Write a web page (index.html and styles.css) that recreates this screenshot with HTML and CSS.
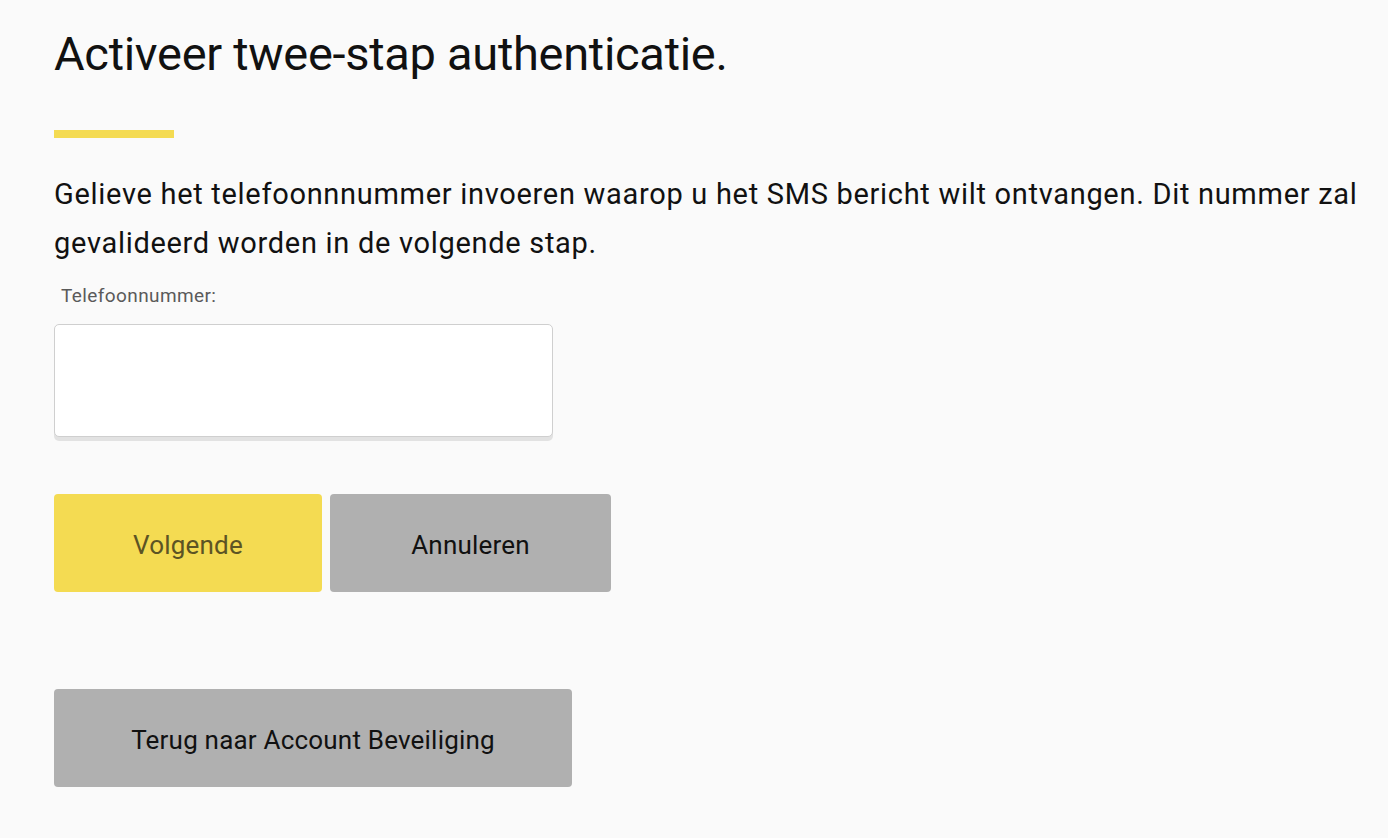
FILE: index.html
```html
<!DOCTYPE html>
<html lang="nl">
<head>
    <meta charset="UTF-8">
    <meta name="viewport" content="width=device-width, initial-scale=1.0">
    <title>Activeer twee-stap authenticatie</title>
    <link rel="stylesheet" href="styles.css">
</head>
<body>
    <main class="setup">
        <h1 class="setup-title">Activeer twee-stap authenticatie.</h1>
        <div class="accent-bar"></div>

        <p class="intro">Gelieve het telefoonnnummer invoeren waarop u het SMS bericht wilt ontvangen. Dit nummer zal gevalideerd worden in de volgende stap.</p>

        <form class="phone-form" onsubmit="return false;">
            <label class="field-label" for="phone">Telefoonnummer:</label>
            <input class="field-input" type="tel" id="phone" name="phone">

            <div class="actions">
                <button class="btn btn-primary" type="submit">Volgende</button>
                <button class="btn btn-secondary cancel" type="button">Annuleren</button>
            </div>
        </form>

        <a class="btn btn-secondary back" href="#">Terug naar Account Beveiliging</a>
    </main>
</body>
</html>
```

FILE: styles.css
```css
:root {
    --page-bg: #fafafa;
    --text-color: #111111;
    --label-color: #5a5a5a;
    --accent: #f4db52;
    --accent-text: #5c5424;
    --grey-btn: #b0b0b0;
    --input-border: #cfcfcf;
}

* {
    margin: 0;
    padding: 0;
    box-sizing: border-box;
}

body {
    background-color: var(--page-bg);
    color: var(--text-color);
    font-family: Roboto, "Liberation Sans", Arial, sans-serif;
}

.setup {
    display: flex;
    flex-direction: column;
    align-items: flex-start;
    padding: 26px 20px 40px 54px;
}

.setup-title {
    font-size: 47px;
    font-weight: 400;
    line-height: 56px;
    letter-spacing: -0.3px;
}

.accent-bar {
    width: 120px;
    height: 8px;
    margin-top: 48px;
    background-color: var(--accent);
}

.intro {
    margin-top: 32px;
    font-size: 29px;
    line-height: 49px;
    letter-spacing: 0.7px;
}

.phone-form {
    display: flex;
    flex-direction: column;
    align-items: flex-start;
}

.field-label {
    margin-top: 16px;
    padding-left: 7px;
    font-size: 19px;
    line-height: 24px;
    letter-spacing: 0.4px;
    color: var(--label-color);
}

.field-input {
    width: 499px;
    height: 113px;
    margin-top: 16px;
    border: 1px solid var(--input-border);
    border-radius: 5px;
    background-color: #ffffff;
    box-shadow: 0 4px 0 #e2e2e2;
    font-family: inherit;
    font-size: 22px;
    padding: 0 16px;
    outline: none;
}

.actions {
    display: flex;
    gap: 8px;
    margin-top: 57px;
}

.btn {
    display: flex;
    align-items: center;
    justify-content: center;
    height: 98px;
    padding-top: 4px;
    border: none;
    border-radius: 4px;
    font-family: inherit;
    font-size: 26px;
    letter-spacing: 0.2px;
    color: var(--text-color);
    text-decoration: none;
    cursor: pointer;
}

.btn-primary {
    width: 268px;
    background-color: var(--accent);
    color: var(--accent-text);
}

.btn-secondary {
    background-color: var(--grey-btn);
}

.cancel {
    width: 281px;
}

.back {
    width: 518px;
    margin-top: 97px;
}
```
